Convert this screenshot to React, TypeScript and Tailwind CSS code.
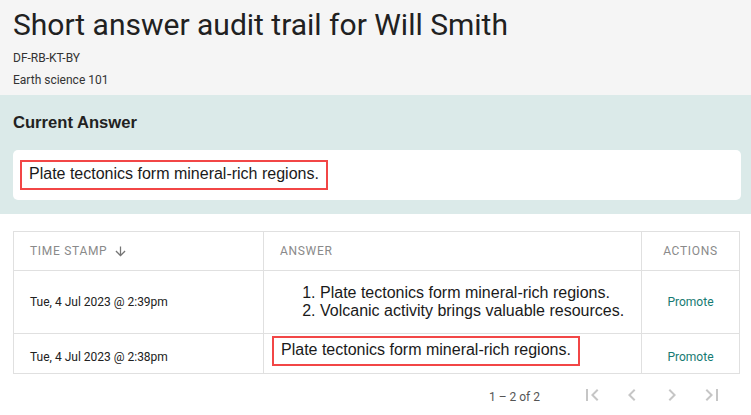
import React from 'react';

const roboto = { fontFamily: 'Roboto, "Liberation Sans", sans-serif' };
const arial = { fontFamily: '"Liberation Sans", Arial, sans-serif' };

const answerText = 'Plate tectonics form mineral-rich regions.';

function Highlight({ children }: { children: React.ReactNode }) {
  return (
    <span
      className="inline-block border-2 border-[#f24646] px-[7px] pb-[2px] text-[16px] leading-6 text-[#1a1a1a]"
      style={arial}
    >
      {children}
    </span>
  );
}

function PagerIcon({ d }: { d: string }) {
  return (
    <button className="flex h-10 w-10 items-center justify-center" disabled>
      <svg viewBox="0 0 24 24" width="24" height="24" className="fill-[#c6c6c6]">
        <path d={d} />
      </svg>
    </button>
  );
}

export default function App() {
  const rows = [
    { stamp: 'Tue, 4 Jul 2023 @ 2:39pm', kind: 'list' as const },
    { stamp: 'Tue, 4 Jul 2023 @ 2:38pm', kind: 'plain' as const },
  ];

  return (
    <div className="min-h-[415px] w-full bg-white text-[#212121]">
      {/* header */}
      <div className="bg-[#f5f5f5] pl-[13px] pb-[5px]" style={roboto}>
        <h1 className="text-[30px] font-normal leading-[49px] text-[#212121]">
          Short answer audit trail for Will Smith
        </h1>
        <div className="-mt-px text-[12px] leading-5 text-[#333]">DF-RB-KT-BY</div>
        <div className="mt-[2px] text-[12px] leading-5 text-[#333]">Earth science 101</div>
      </div>

      {/* current answer */}
      <div className="bg-[#dbeae9] pl-[13px] pr-[10px] pt-4 pb-[14px]">
        <h2 className="text-[16.6px] font-bold leading-6 text-[#222]" style={arial}>
          Current Answer
        </h2>
        <div className="mt-[15px] rounded-[5px] bg-white px-[7px] py-[10px]">
          <Highlight>{answerText}</Highlight>
        </div>
      </div>

      {/* audit table */}
      <div className="ml-[13px] mr-[11px] mt-[17px]">
        <div className="border border-[#e0e0e0]">
          <div
            className="grid h-[39px] grid-cols-[250px_378px_1fr] border-b border-[#e0e0e0] text-[12px] tracking-[0.7px] text-[#8a8a8a]"
            style={roboto}
          >
            <div className="flex items-center border-r border-[#e0e0e0] pl-4">
              TIME STAMP
              <svg viewBox="0 0 24 24" width="15" height="15" className="ml-[6px] fill-[#757575]">
                <path d="M20 12l-1.41-1.41L13 16.170V4h-2v12.17l-5.58-5.59L4 12l8 8 8-8z" />
              </svg>
            </div>
            <div className="flex items-center border-r border-[#e0e0e0] pl-4">ANSWER</div>
            <div className="flex items-center justify-center">ACTIONS</div>
          </div>

          {rows.map((row, i) => (
            <div
              key={row.stamp}
              className={
                row.kind === 'list'
                  ? 'grid h-[63px] grid-cols-[250px_378px_1fr] border-b border-[#e0e0e0]'
                  : 'grid h-[39px] grid-cols-[250px_378px_1fr]'
              }
            >
              <div
                className={
                  i === 0
                    ? 'flex items-center border-r border-[#e0e0e0] pl-4 text-[12px] text-[#212121]'
                    : 'flex items-center border-r border-[#e0e0e0] pl-4 pt-[7px] text-[12px] text-[#212121]'
                }
                style={roboto}
              >
                {row.stamp}
              </div>
              {row.kind === 'list' ? (
                <div className="flex items-center border-r border-[#e0e0e0] px-4">
                  <ol className="list-decimal pl-10 text-[16px] leading-[18px] text-[#1a1a1a]" style={arial}>
                    <li>Plate tectonics form mineral-rich regions.</li>
                    <li>Volcanic activity brings valuable resources.</li>
                  </ol>
                </div>
              ) : (
                <div className="border-r border-[#e0e0e0] pl-2 pt-[2px]">
                  <Highlight>{answerText}</Highlight>
                </div>
              )}
              <div
                className={
                  i === 0
                    ? 'flex items-center justify-center text-[12px] text-[#167a72]'
                    : 'flex items-center justify-center pt-[7px] text-[12px] text-[#167a72]'
                }
                style={roboto}
              >
                Promote
              </div>
            </div>
          ))}
        </div>

        {/* paginator */}
        <div className="flex h-[42px] items-center justify-end pr-[8px]" style={roboto}>
          <span className="mr-8 pt-[3px] text-[12px] text-[#555]">1 – 2 of 2</span>
          <PagerIcon d="M18.41 16.59L13.82 12l4.59-4.59L17 6l-6 6 6 6zM6 6h2v12H6z" />
          <PagerIcon d="M15.41 7.41L14 6l-6 6 6 6 1.41-1.41L10.83 12z" />
          <PagerIcon d="M10 6L8.59 7.41 13.17 12l-4.58 4.59L10 18l6-6z" />
          <PagerIcon d="M5.59 7.41L10.18 12l-4.59 4.59L7 18l6-6-6-6zM16 6h2v12h-2z" />
        </div>
      </div>
    </div>
  );
}
